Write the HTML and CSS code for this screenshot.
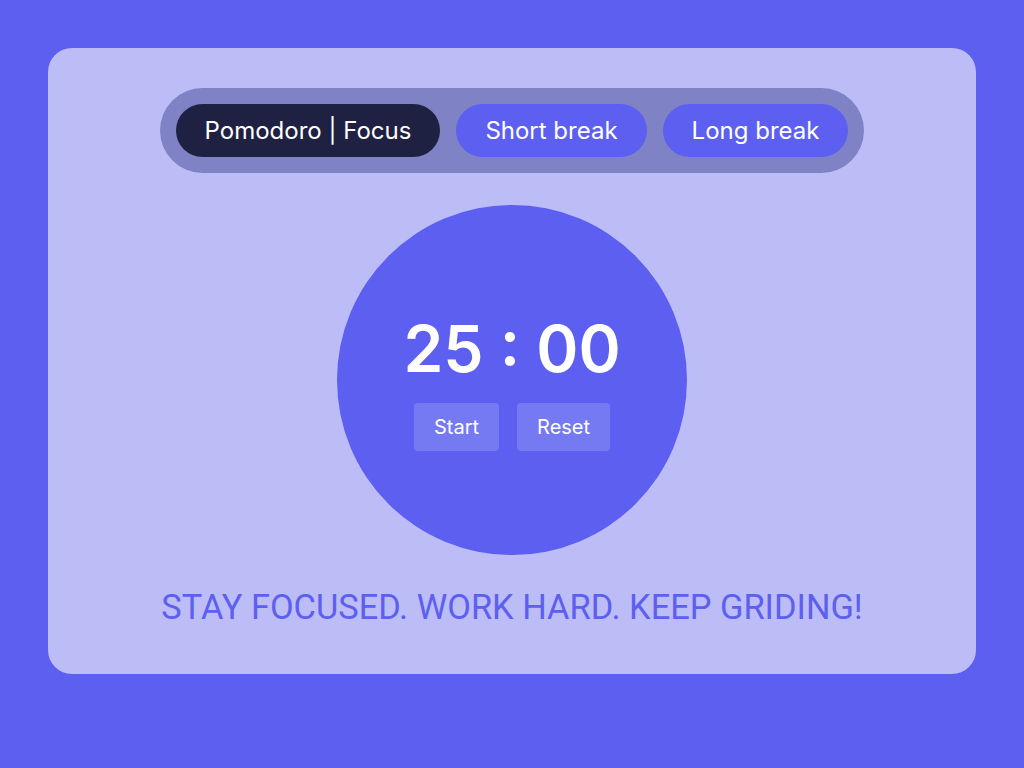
FILE: index.html
```html
<!DOCTYPE html>
<html lang="en">
<head>
<meta charset="utf-8">
<title>Pomodoro</title>
<link rel="stylesheet" href="styles.css">
</head>
<body>
  <main class="card">
    <nav class="tabs">
      <button class="tab tab-active">Pomodoro | Focus</button>
      <button class="tab">Short break</button>
      <button class="tab">Long break</button>
    </nav>
    <section class="clock">
      <div class="time">25 : 00</div>
      <div class="controls">
        <button class="ctrl">Start</button>
        <button class="ctrl">Reset</button>
      </div>
    </section>
    <p class="motto">STAY FOCUSED. WORK HARD. KEEP GRIDING!</p>
  </main>
</body>
</html>
```

FILE: styles.css
```css
* { box-sizing: border-box; }
html, body { margin: 0; padding: 0; }
body {
  background: #5c5fef;
  width: 1024px;
  height: 768px;
  padding: 48px;
  font-family: "Inter", "Liberation Sans", sans-serif;
}
.card {
  background: #bcbcf7;
  border-radius: 24px;
  padding: 40px 40px 47px;
  display: flex;
  flex-direction: column;
  align-items: center;
}
.tabs {
  display: flex;
  gap: 16px;
  padding: 16px;
  background: #7f83c6;
  border-radius: 999px;
}
.tab {
  font-family: "Inter", sans-serif;
  font-size: 24px;
  line-height: 29px;
  padding: 12px 29px;
  border: none;
  border-radius: 999px;
  background: #5c5fef;
  color: #fff;
  cursor: pointer;
}
.tab-active { background: #1f2142; }
.clock {
  margin-top: 32px;
  width: 350px;
  height: 350px;
  border-radius: 50%;
  background: #5c5fef;
  display: flex;
  flex-direction: column;
  align-items: center;
  justify-content: center;
  gap: 16px;
}
.time {
  font-size: 64px;
  font-weight: 600;
  color: #fff;
  line-height: 77px;
}
.controls { display: flex; gap: 18px; }
.ctrl {
  font-family: "Inter", sans-serif;
  font-size: 20px;
  line-height: 24px;
  padding: 12px 20px;
  border: none;
  border-radius: 4px;
  background: #7579f2;
  color: #fff;
}
.motto {
  margin: 32px 0 0;
  font-family: "Roboto", sans-serif;
  font-size: 34.4px;
  line-height: 40px;
  color: #5c5fef;
}
```
